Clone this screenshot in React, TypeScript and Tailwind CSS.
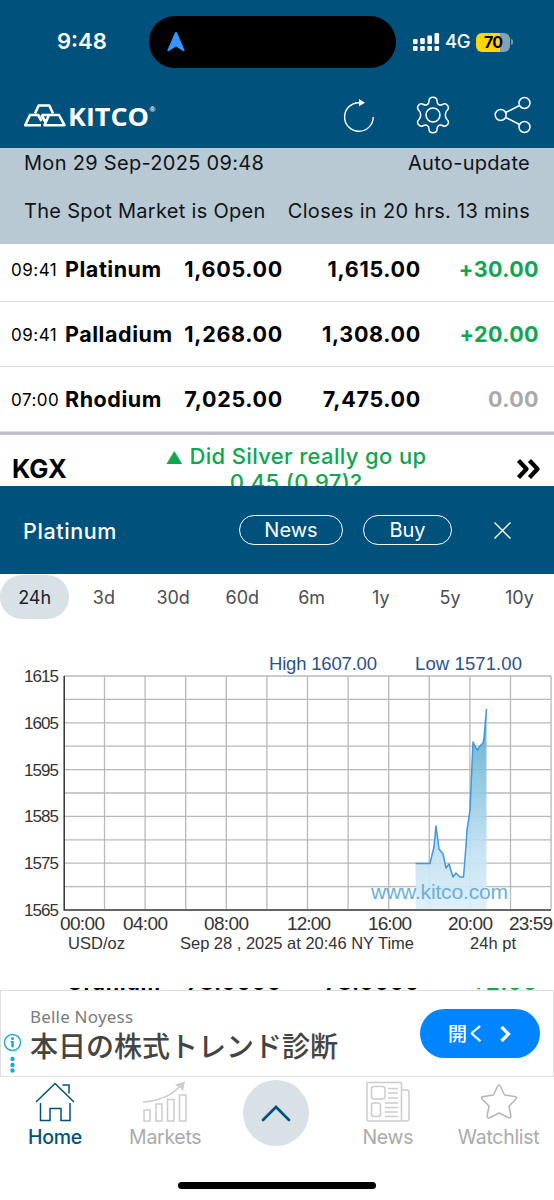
import type { ReactNode } from 'react';

type Quote = {
  time: string;
  name: string;
  bid: string;
  ask: string;
  change: string;
};

const quotes: Quote[] = [
  { time: '09:41', name: 'Platinum', bid: '1,605.00', ask: '1,615.00', change: '+30.00' },
  { time: '09:41', name: 'Palladium', bid: '1,268.00', ask: '1,308.00', change: '+20.00' },
  { time: '07:00', name: 'Rhodium', bid: '7,025.00', ask: '7,475.00', change: '0.00' },
];

const ranges = ['24h', '3d', '30d', '60d', '6m', '1y', '5y', '10y'];

function StatusBar() {
  return (
    <div className="flex h-[67px] pt-4">
      <div className="w-[149px] pl-[57px] pt-[10px] text-[22px] font-semibold leading-[31px]">9:48</div>
      <div className="flex h-[52px] w-[247px] items-center rounded-full bg-black pl-[17px]">
        <svg width="20" height="22" viewBox="0 0 20 22" fill="#3395ff">
          <path d="M10 1Q11 1 11.5 2.400L18.500 19Q19 21 17 20L10 15.500L3 20Q1 21 1.500 19L8.500 2.400Q9 1 10 1Z" />
        </svg>
      </div>
      <div className="flex h-[52px] items-center pl-[17px]">
        <svg width="27" height="20" viewBox="0 0 27 20" fill="white">
          <rect x="0" y="7" width="4.600" height="5" rx="1.200" />
          <rect x="7.200" y="6" width="4.600" height="6" rx="1.200" />
          <rect x="14.400" y="3.500" width="4.600" height="8.500" rx="1.200" />
          <rect x="21.500" y="1" width="4.600" height="11" rx="1.200" />
          <rect x="0" y="14" width="4.600" height="5" rx="1.200" />
          <rect x="7.200" y="14" width="4.600" height="5" rx="1.200" />
          <rect x="14.400" y="14" width="4.600" height="5" rx="1.200" />
          <rect x="21.500" y="14" width="4.600" height="5" rx="1.200" />
        </svg>
        <span className="ml-[5px] w-[31px] text-[18.500px] font-medium tracking-[-0.3px]">4G</span>
        <div className="flex h-[19px] w-[34px] items-center justify-center rounded-[6px] bg-linear-to-r from-[#ffd60a] from-70% to-[#80a3b8] to-70% text-[16px] font-bold leading-none tracking-[-0.8px] text-black">
          70
        </div>
        <div className="ml-[1px] h-[6px] w-[2px] rounded-r-full bg-[#6f9ab3]" />
      </div>
    </div>
  );
}

function Toolbar() {
  return (
    <div className="flex h-[81px] items-center pl-[23px] pt-[14px]">
      <svg width="134" height="36" viewBox="0 -4 134 36" fill="none" stroke="white" strokeWidth="2.600" strokeLinejoin="round">
        <path d="M12 12.500L15.700 4.500H26.300L30 12.500" />
        <path d="M18 24.200H2.200L7 14H15.200L18.500 20" />
        <path d="M21.500 24.200L26 14H36L41.500 24.200H21.500ZM18.500 14H26M18.500 14L23 22" />
        <text x="45" y="25.200" fill="white" stroke="none" className="font-['Open_Sans'] text-[25.500px] font-bold" textLength="81" lengthAdjust="spacingAndGlyphs">
          KITCO
        </text>
        <text x="126.500" y="11" fill="white" stroke="none" className="font-['Liberation_Sans'] text-[8px] font-bold">
          ®
        </text>
      </svg>
      <svg className="ml-[186px] mt-[2px]" width="32" height="36" viewBox="0 0 32 36" fill="none" stroke="white" strokeWidth="1.400">
        <path d="M30.200 19A14.300 14.300 0 1 1 16 4.700H18" />
        <path d="M16 1L22 4.700L16 8.200Z" fill="white" stroke="none" />
      </svg>
      <svg className="ml-[41px]" width="34" height="38" viewBox="0 0 34 38" fill="none" stroke="white" strokeWidth="1.500" strokeLinejoin="round">
        <path d="M13 5C13 0 21 0 21 5C21 8.500 24 10 26.500 8.500C30.500 6 34.500 11.500 31 14.500C28.800 16.500 28.800 21.500 31 23.500C34.500 26.500 30.500 32 26.500 29.500C24 28 21 29.500 21 33C21 38 13 38 13 33C13 29.500 10 28 7.500 29.500C3.500 32 -0.500 26.500 3 23.500C5.200 21.500 5.200 16.500 3 14.500C-0.500 11.500 3.500 6 7.500 8.500C10 10 13 8.500 13 5Z" />
        <circle cx="17" cy="19" r="7" />
      </svg>
      <svg className="ml-[44px]" width="38" height="38" viewBox="0 0 38 38" fill="none" stroke="white" strokeWidth="1.500">
        <circle cx="6.700" cy="19" r="5.500" />
        <circle cx="30.500" cy="7" r="5.500" />
        <circle cx="30.500" cy="31" r="5.500" />
        <path d="M11.600 16.500L25.600 9.500M11.600 21.500L25.600 28.500" />
      </svg>
    </div>
  );
}

function QuoteRow({ quote }: { quote: Quote }) {
  const up = quote.change.startsWith('+');
  return (
    <div className="flex h-[65px] shrink-0 items-center border-b border-[#dedee0] pt-[1px] text-[21.500px] font-bold tracking-[0.4px]">
      <span className="w-[65px] pl-[11px] pt-[3px] text-[17px] font-normal tracking-[0.5px]">{quote.time}</span>
      <span className="w-[107px] tracking-[0.550px]">{quote.name}</span>
      <span className="w-[111px] text-right tracking-[0.7px]">{quote.bid}</span>
      <span className="w-[138px] text-right tracking-[0.7px]">{quote.ask}</span>
      <span className={up ? 'w-[118px] text-right text-[#0ea651]' : 'w-[118px] text-right text-[#aaaaaa]'}>
        {quote.change}
      </span>
    </div>
  );
}

function PriceChart() {
  const cols = Array.from({ length: 12 }, (_, i) => 104.500 + i * 40.600);
  const rows = Array.from({ length: 10 }, (_, i) => 36 + i * 23.400);
  const line =
    '415.500,223.500 430,223.500 432,215 434,207 436,186 439,209 443,214 446,228 449,224 453,237 456,233 460,237 463.500,237 466,206 467,190 470,170 473,102 477,110 480,106 483,103 484,98 486.500,69';
  const times: [string, number, number][] = [
    ['00:00', 60, 45],
    ['04:00', 123, 45],
    ['08:00', 204, 45],
    ['12:00', 287, 44],
    ['16:00', 368, 44],
    ['20:00', 448, 45],
    ['23:59', 509, 44],
  ];

  return (
    <svg className="block font-['Liberation_Sans']" width="554" height="320" viewBox="0 0 554 320">
      <defs>
        <linearGradient id="area" x1="0" y1="69" x2="0" y2="269" gradientUnits="userSpaceOnUse">
          <stop offset="0" stopColor="#4aa3d2" />
          <stop offset="0.300" stopColor="#7fbfdd" />
          <stop offset="0.700" stopColor="#c0e0f1" />
          <stop offset="1" stopColor="#dceef9" />
        </linearGradient>
      </defs>
      <g stroke="#b8b8b8" strokeWidth="1.300">
        {cols.map((x) => (
          <path key={x} d={`M${x} 36V269`} />
        ))}
        {rows.map((y) => (
          <path key={y} d={`M64 ${y}H551`} />
        ))}
      </g>
      <polygon points={`415.500,269 ${line} 486.500,269`} fill="url(#area)" fillOpacity="0.900" />
      <polyline points={line} fill="none" stroke="#3f98dc" strokeWidth="1.500" strokeLinejoin="round" />
      <path d="M64.200 36V270H551" fill="none" stroke="#333333" strokeWidth="1.500" />
      <text x="371" y="259" fontSize="21" fill="#6aafd9" textLength="137">www.kitco.com</text>
      <g fontSize="18.500" fill="#2d5288">
        <text x="269" y="30" textLength="108">High 1607.00</text>
        <text x="415" y="30" textLength="107">Low 1571.00</text>
      </g>
      <g fontSize="17" fill="#333333">
        {[1615, 1605, 1595, 1585, 1575, 1565].map((value, i) => (
          <text key={value} x="24" y={42 + i * 46.800} textLength="35">
            {value}
          </text>
        ))}
      </g>
      <g fontSize="19" fill="#333333">
        {times.map(([label, x, width]) => (
          <text key={label} x={x} y="290" textLength={width}>
            {label}
          </text>
        ))}
      </g>
      <g fontSize="16.500" fill="#333333">
        <text x="68" y="309" textLength="57">USD/oz</text>
        <text x="180" y="309" textLength="234">Sep 28 , 2025 at 20:46 NY Time</text>
        <text x="470" y="309" textLength="46">24h pt</text>
      </g>
    </svg>
  );
}

function Ad() {
  return (
    <div className="flex h-[87px] border border-[#dfdfe0]">
      <svg className="mt-[42px]" width="25" height="42" viewBox="0 0 25 42" fill="#17aec5">
        <circle cx="11.500" cy="9.500" r="8" fill="none" stroke="#17aec5" strokeWidth="1.400" />
        <circle cx="11.500" cy="5.500" r="1.500" />
        <path d="M9.500 8H12.800V14.300H10.300V9.500H9.500Z" />
        <circle cx="11.500" cy="26" r="2.200" />
        <circle cx="11.500" cy="32" r="2.200" />
        <circle cx="11.500" cy="37.500" r="2.200" />
      </svg>
      <div className="w-[394px] pl-[4px] pt-[14px]">
        <div className="font-['Noto_Sans'] text-[17px] leading-6 tracking-[0.2px] text-[#7b7b7b]">Belle Noyess</div>
        <div className="whitespace-nowrap font-['Noto_Sans_CJK_JP',sans-serif] text-[28px] font-medium leading-[32px] text-[#444444]">
          本日の株式トレンド診断
        </div>
      </div>
      <div className="mt-[18px] flex h-[49px] w-[120px] items-center rounded-full bg-[#0084ff] pl-[28px] font-['Noto_Sans_CJK_JP',sans-serif] text-[19px] font-medium text-white">
        <span>開く</span>
        <svg className="ml-[14px]" width="12" height="18" viewBox="0 0 12 18" fill="none" stroke="white" strokeWidth="3.200">
          <path d="M1.500 2L8.500 9L1.500 16" />
        </svg>
      </div>
    </div>
  );
}

function NavItem({ label, active, children }: { label: string; active?: boolean; children?: ReactNode }) {
  return (
    <div className={active ? 'flex w-[110px] flex-col items-center text-[#00517b]' : 'flex w-[111px] flex-col items-center text-[#aaaaaa]'}>
      <div className="flex h-[46px] items-end">{children}</div>
      <span
        className={
          active ? 'text-[19.500px] font-medium leading-7 tracking-[-0.3px]' : 'text-[19.500px] leading-7 tracking-[-0.3px]'
        }
      >
        {label}
      </span>
    </div>
  );
}

function BottomNav() {
  return (
    <div className="flex h-[105px] bg-white">
      <NavItem label="Home" active>
        <svg width="40" height="42" viewBox="0 0 40 42" fill="none" stroke="#00517b" strokeWidth="1.500">
          <path d="M1 21L20 2.500L39 21M5.500 22V39.500H15V27.500H26V39.500H35V22M27.500 4H34V12.500" />
        </svg>
      </NavItem>
      <NavItem label="Markets">
        <svg width="44" height="42" viewBox="0 0 44 42" fill="none" stroke="#cccccc" strokeWidth="1.500">
          <path d="M1 29H7V40H1ZM13 23H19V40H13ZM24.500 18.500H31V40H24.500ZM36.500 14H43V40H36.500Z" />
          <path d="M0 21C16 20 30 14 39 3" />
          <path d="M34 4L41 1.500L39.500 8.500L37.500 5.500Z" fill="#cccccc" />
        </svg>
      </NavItem>
      <div className="flex w-[112px] justify-center pt-[3px]">
        <div className="flex h-[66px] w-[66px] items-center justify-center rounded-full bg-[#d8e1e5]">
          <svg width="32" height="20" viewBox="0 0 32 20" fill="none" stroke="#00517b" strokeWidth="2.700" strokeLinecap="round">
            <path d="M3 17L16 4L29 17" />
          </svg>
        </div>
      </div>
      <NavItem label="News">
        <svg width="44" height="42" viewBox="0 0 44 42" fill="none" stroke="#cccccc" strokeWidth="1.500">
          <rect x="1" y="1.500" width="34.500" height="38.500" rx="1" />
          <path d="M36 9H41Q43 9 43 11V37Q43 40 40 40H35" />
          <rect x="5.500" y="5.500" width="13.500" height="12.500" rx="2.500" />
          <rect x="5.500" y="22" width="9" height="13.500" rx="2.500" />
          <path d="M22 7.500H32M22 12H32M22 17H32M19 22H32M19 26.500H32M19 31H32M19 35.500H32" />
        </svg>
      </NavItem>
      <NavItem label="Watchlist">
        <svg width="38" height="42" viewBox="0 0 38 42" fill="none" stroke="#b5b5b5" strokeWidth="1.500" strokeLinejoin="round">
          <path d="M17.500 5.500Q19 2.500 20.500 5.500L24.500 14L34.500 15.500Q38 16 35.500 18.500L29 25L30.800 34.500Q31.200 38 28 36.500L19 32L10 36.500Q6.800 38 7.200 34.500L9 25L2.500 18.500Q0 16 3.500 15.500L13.500 14Z" />
        </svg>
      </NavItem>
    </div>
  );
}

export default function App() {
  return (
    <div className="h-[1200px] w-[554px] overflow-hidden bg-white font-['Inter',sans-serif] text-black">
      <header className="h-[148px] bg-[#00517b] text-white">
        <StatusBar />
        <Toolbar />
      </header>

      <div className="h-[96px] border-b border-[#c4c0c8] bg-[#b8c9d3] px-6 text-[20px] tracking-[0.3px] text-[#101418]">
        <div className="flex h-[30px] items-center justify-between">
          <span>Mon 29 Sep-2025 09:48</span>
          <span>Auto-update</span>
        </div>
        <div className="mt-[18px] flex h-[30px] items-center justify-between whitespace-nowrap">
          <span>The Spot Market is Open</span>
          <span>Closes in 20 hrs. 13 mins</span>
        </div>
      </div>

      <div className="flex h-[188px] flex-col justify-end overflow-hidden">
        {quotes.map((quote) => (
          <QuoteRow key={quote.name} quote={quote} />
        ))}
      </div>

      <div className="flex h-[54px] overflow-hidden border-t-[3px] border-[#c1c0ca]">
        <div className="w-[150px] pl-3 pt-[17px] text-[25.500px] font-bold leading-[34px]">KGX</div>
        <div className="w-[292px] pt-[8px] text-center text-[22px] font-medium leading-[26px] tracking-[0.350px] text-[#0ea651]">
          <span className="inline-block text-[17px] leading-none">▲</span> Did Silver really go up 0.45 (0.97)?
        </div>
        <svg className="ml-[74px] mt-[23px]" width="26" height="22" viewBox="0 0 26 22" fill="none" stroke="black" strokeWidth="4.300">
          <path d="M2.500 2.500L10.500 11L2.500 19.500M13.500 2.500L21.500 11L13.500 19.500" strokeLinejoin="round" />
        </svg>
      </div>

      <div className="flex h-[88px] items-center bg-[#00517b] pl-[23px] text-[20px] text-white">
        <span className="w-[216px] pt-[2px] text-[21.500px] font-medium tracking-[0.6px]">Platinum</span>
        <div className="flex h-[30px] w-[104px] items-center justify-center rounded-full border-[1.500px] border-white">News</div>
        <div className="ml-5 flex h-[30px] w-[89px] items-center justify-center rounded-full border-[1.500px] border-white">Buy</div>
        <svg className="ml-[42px]" width="17" height="17" viewBox="0 0 17 17" stroke="white" strokeWidth="1.400">
          <path d="M0.500 0.500L16.500 16.500M16.500 0.500L0.500 16.500" />
        </svg>
      </div>

      <div className="flex h-[66px] pt-[1px] text-[18px] text-[#4a4d50]">
        {ranges.map((range, i) => (
          <div
            key={range}
            className={
              i === 0
                ? 'flex h-[44px] flex-1 items-center justify-center rounded-full bg-[#d8e1e5] text-[#1d2226]'
                : 'flex h-[44px] flex-1 items-center justify-center'
            }
          >
            {range}
          </div>
        ))}
      </div>

      <PriceChart />

      {/* only the bottom edge of the next quote row shows between the chart and the ad */}
      <div className="h-[30px] pt-[28px]">
        <div className="flex h-[2px] items-end overflow-hidden text-[21.500px] font-bold leading-[15px] tracking-[0.7px]">
          <span className="w-[167px] pl-[67px]">Uranium</span>
          <span className="w-[115px] text-right">78.0000</span>
          <span className="w-[138px] text-right">78.0000</span>
          <span className="w-[118px] text-right text-[#0ea651]">+2.00</span>
        </div>
      </div>
      <Ad />
      <BottomNav />
      <div className="mx-auto h-[7px] w-[198px] rounded-full bg-black" />
    </div>
  );
}
